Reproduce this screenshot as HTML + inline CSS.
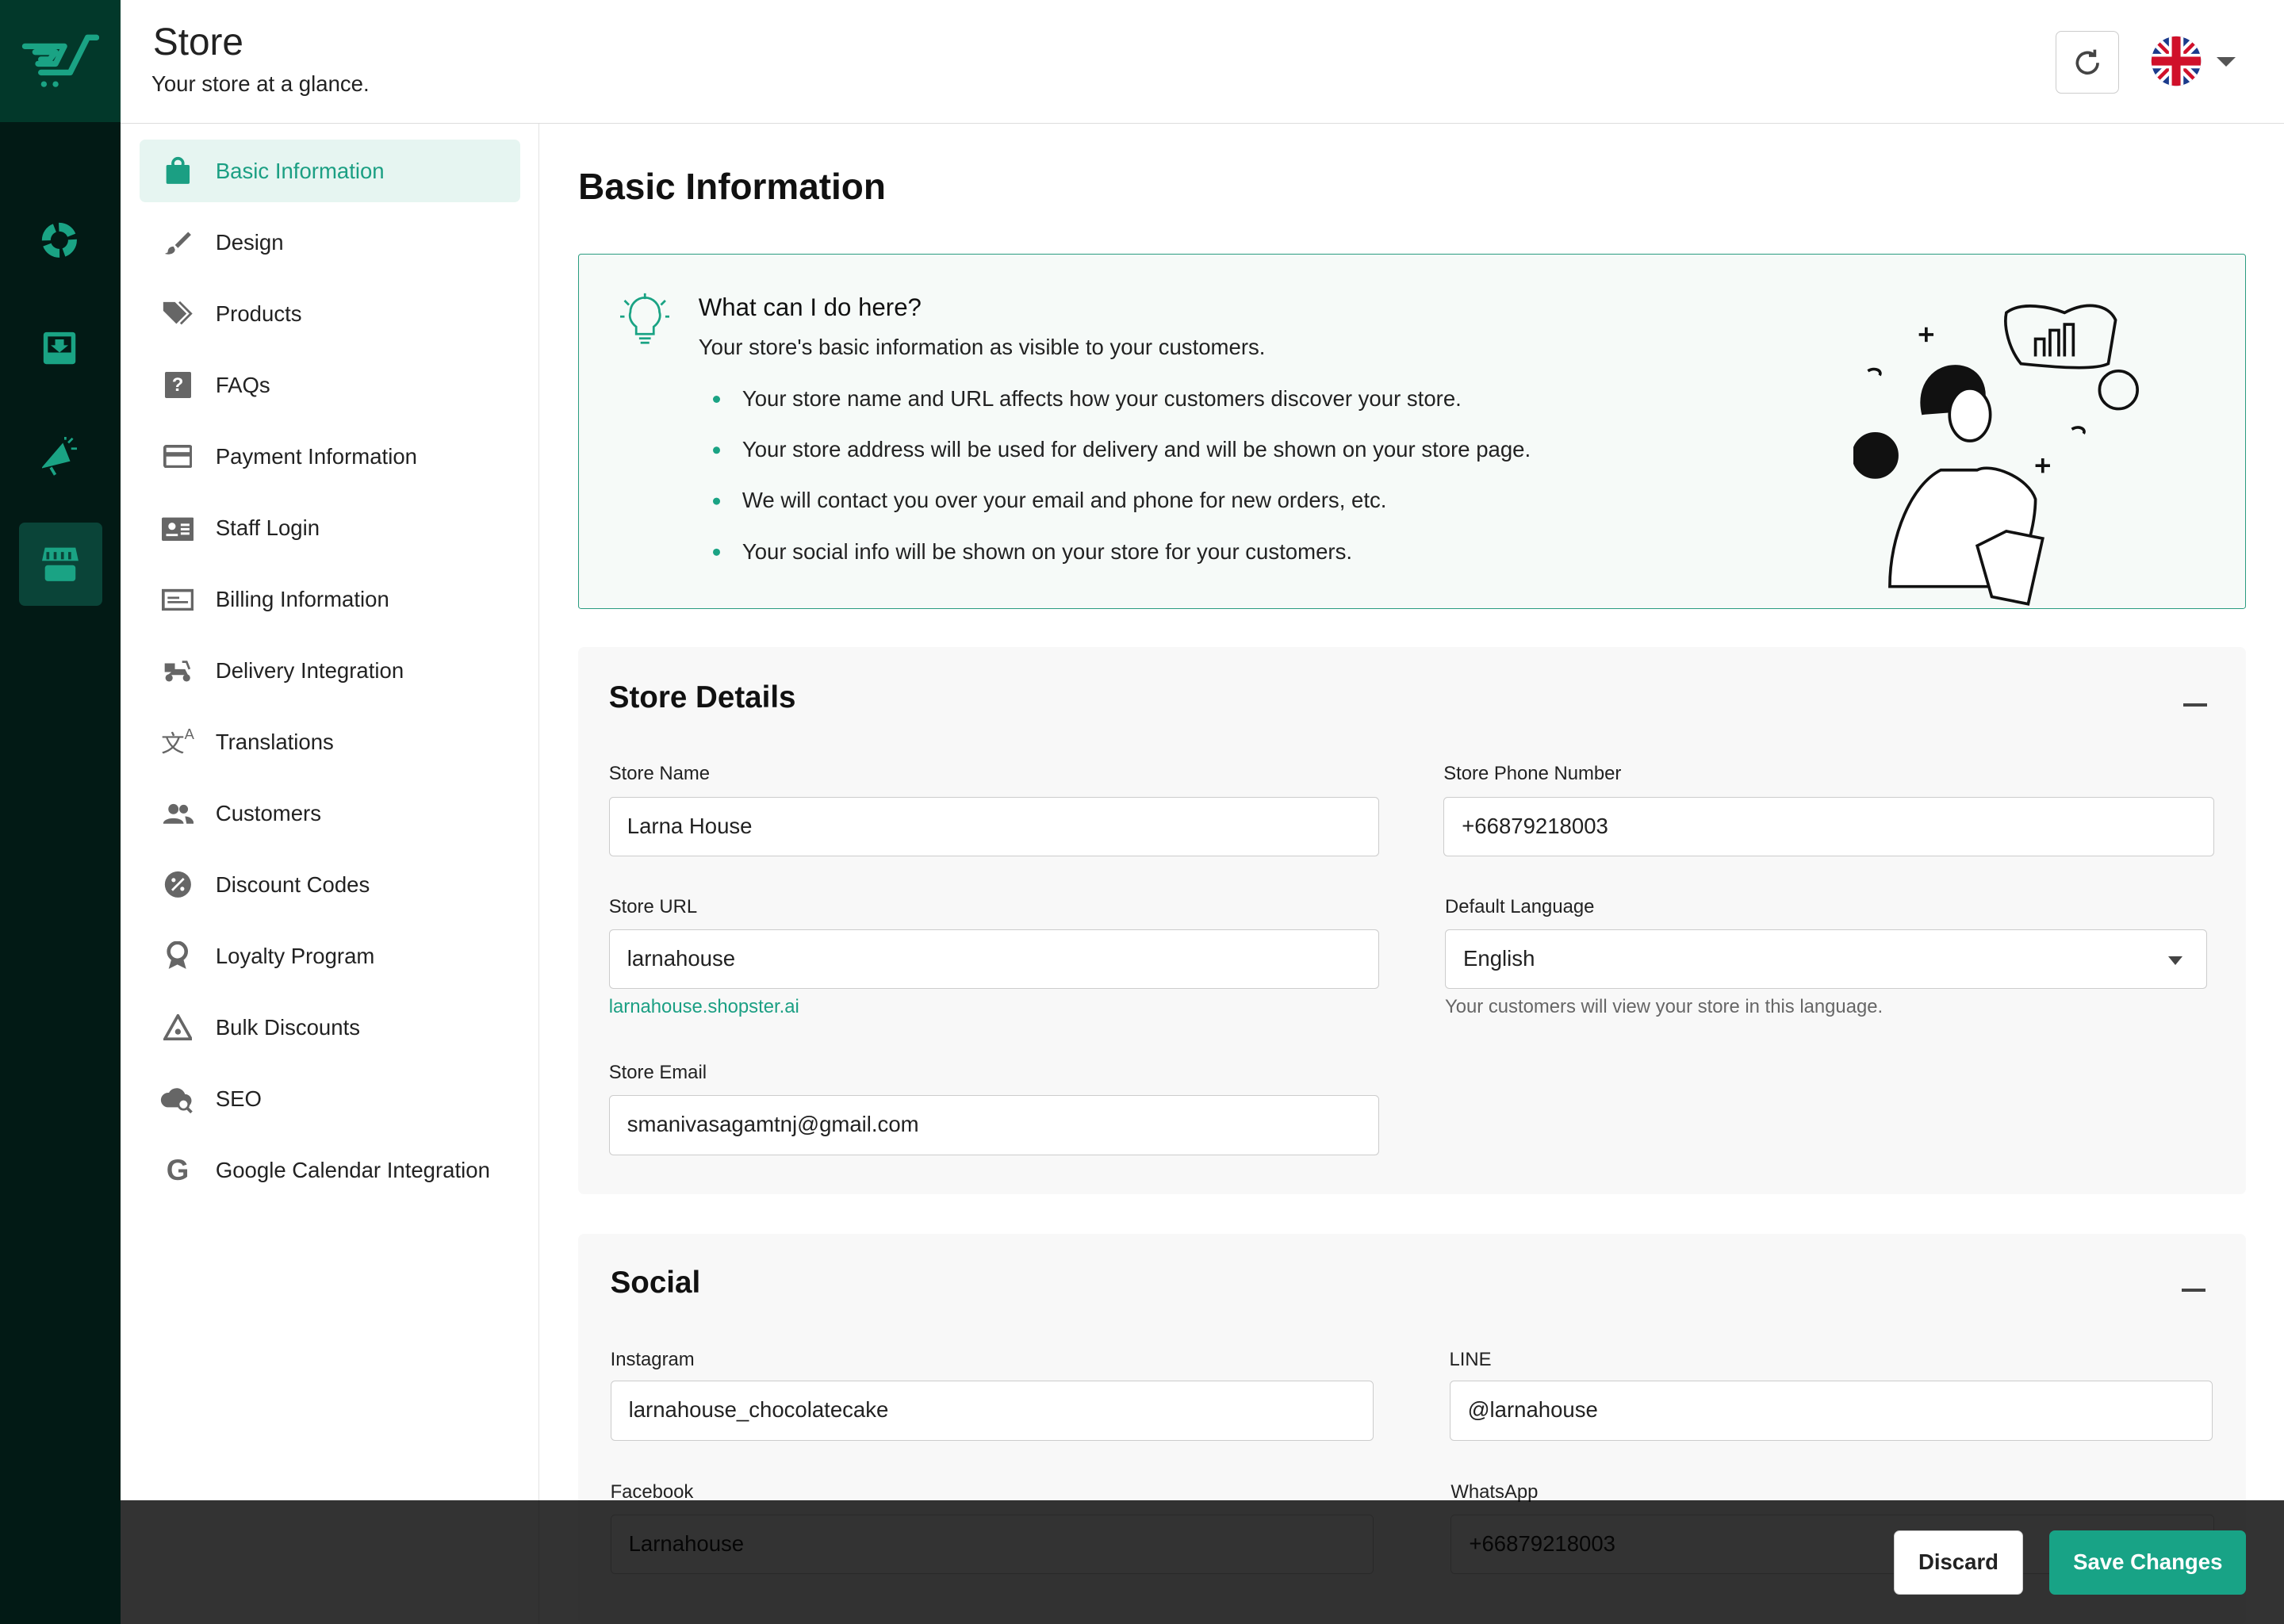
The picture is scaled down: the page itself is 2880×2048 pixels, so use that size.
<!DOCTYPE html>
<html><head><meta charset="utf-8"><style>
html{zoom:1.83673}
*{box-sizing:border-box;margin:0;padding:0}
body{width:1568px;height:1115px;overflow:hidden;font-family:"Liberation Sans",sans-serif;color:#222;background:#fff;position:relative}
.abs{position:absolute}
.rail{left:0;top:0;width:83px;height:1115px;background:#021a15}
.rail .top{position:absolute;left:0;top:0;width:83px;height:84px;background:#02382a}
.hdr{left:83px;top:0;right:0;height:85px;border-bottom:1px solid #ddd;background:#fff}
.nav{left:83px;top:85px;width:287px;height:1030px;border-right:1px solid #e2e2e2}
.item{position:absolute;left:13px;width:261px;height:43px;display:flex;align-items:center;font-size:15px;color:#222}
.item .ic{width:52px;display:flex;justify-content:center}
.item.act{background:#e6f5f1;color:#1b9f83;border-radius:4px}
h1{font-size:25px;font-weight:normal;color:#111}
.info{left:397px;top:174px;width:1145px;height:244px;border:1px solid #2a9c80;background:#f6faf8;border-radius:2px}
.card{left:397px;width:1145px;background:#f8f8f8;border-radius:4px}
.lbl{position:absolute;font-size:13px;color:#222}
.inp{position:absolute;height:41px;border:1px solid #ccc;background:#fff;border-radius:3px;font-size:15px;padding:0 12px;line-height:39px;color:#222}
.ttl{position:absolute;font-size:21px;font-weight:bold;color:#111}
.dash{position:absolute;width:16px;height:2px;background:#444}
li{margin-bottom:16px}
</style></head><body>
<div class="abs rail"><div class="top"></div>
<svg class="abs" style="left:14px;top:22px" width="54" height="42" viewBox="0 0 54 42" fill="none" stroke="#1aa384" stroke-width="4" stroke-linecap="round" stroke-linejoin="round"><path d="M3 10 H30 L24 22 H12 M10 14 H24 L20 19 H14 M14 28 H34 L46 4 H52"/><circle cx="16" cy="36" r="2" fill="#1aa384" stroke="none"/><circle cx="24" cy="36" r="2" fill="#1aa384" stroke="none"/></svg>
<svg class="abs" style="left:28px;top:152px" width="26" height="26" viewBox="0 0 26 26"><circle cx="13" cy="13" r="9" fill="none" stroke="#1aa384" stroke-width="6" stroke-dasharray="11 3"/></svg>
<svg class="abs" style="left:29px;top:227px" width="24" height="24" viewBox="0 0 24 24"><rect x="1" y="1" width="22" height="22" rx="2" fill="#1aa384"/><rect x="4" y="4" width="16" height="11" fill="#021a15"/><path d="M9 6h6v4h3l-6 5-6-5h3z" fill="#1aa384"/></svg>
<svg class="abs" style="left:29px;top:300px" width="24" height="28" viewBox="0 0 24 28"><path d="M2 20 L14 6 L18 16 Z M6 21 l3 5" fill="#1aa384" stroke="#1aa384" stroke-width="2"/><path d="M18 4 l3-3 M20 8 h4 M16 2 v-2" stroke="#1aa384" stroke-width="1.5"/></svg>
<div class="abs" style="left:13px;top:359px;width:57px;height:57px;background:#0a4438;border-radius:4px"></div>
<svg class="abs" style="left:29px;top:374px" width="25" height="26" viewBox="0 0 25 26"><path d="M2 2h21l2 9H0z" fill="#1aa384"/><path d="M4 5v5M9 5v5M14 5v5M19 5v5" stroke="#0a4438" stroke-width="2"/><rect x="2" y="14" width="21" height="11" rx="2" fill="#1aa384"/></svg>
</div>
<div class="abs hdr">
<div class="abs" style="left:22px;top:14px;font-size:26px;color:#222">Store</div>
<div class="abs" style="left:21px;top:49px;font-size:15px">Your store at a glance.</div>
<div class="abs" style="left:1328px;top:21px;width:44px;height:43px;border:1px solid #ccc;border-radius:4px"></div>
<svg class="abs" style="left:1339px;top:32px" width="22" height="22" viewBox="0 0 22 22" fill="none" stroke="#444" stroke-width="2"><path d="M18 11a7 7 0 1 1-3-5.7"/><path d="M16 2v4h-4"/></svg>
<svg class="abs" style="left:1393px;top:24px" width="36" height="36" viewBox="0 0 36 36"><clipPath id="c"><circle cx="18" cy="18" r="17"/></clipPath><g clip-path="url(#c)"><rect width="36" height="36" fill="#1a3a8c"/><path d="M0 0L36 36M36 0L0 36" stroke="#fff" stroke-width="7"/><path d="M0 0L36 36M36 0L0 36" stroke="#d0102a" stroke-width="2.5"/><path d="M18 0V36M0 18H36" stroke="#fff" stroke-width="10"/><path d="M18 0V36M0 18H36" stroke="#d0102a" stroke-width="6"/></g></svg>
<div class="abs" style="left:1439px;top:39px;border:7px solid transparent;border-top:7px solid #555;border-bottom:0"></div>
</div>
<div class="abs nav">
<div class="item act" style="top:11px"><span class="ic"><svg width="20" height="20" viewBox="0 0 20 20"><rect x="2" y="6" width="16" height="13" rx="1" fill="#1b9f83"/><circle cx="10" cy="5" r="3.5" fill="none" stroke="#1b9f83" stroke-width="2"/></svg></span>Basic Information</div>
<div class="item" style="top:60px"><span class="ic"><svg width="20" height="20" viewBox="0 0 20 20"><path d="M8 12 L17 3 L19 5 L10 14z" fill="#666"/><path d="M7 13c-3 0-4 2-4 4l-2 1c3 1 7 0 7-3z" fill="#666"/></svg></span>Design</div>
<div class="item" style="top:109px"><span class="ic"><svg width="22" height="18"><path d="M1 3 L1 1 L9 1 L17 9 L10 16 L1 7z" fill="#666"/><path d="M12 1 L20 9 L13 16" fill="none" stroke="#666" stroke-width="1.5"/></svg></span>Products</div>
<div class="item" style="top:158px"><span class="ic"><span style="display:inline-block;width:18px;height:18px;background:#666;color:#fff;font-weight:bold;font-size:13px;text-align:center;line-height:18px;border-radius:1px">?</span></span>FAQs</div>
<div class="item" style="top:207px"><span class="ic"><svg width="20" height="16"><rect x="1" y="1" width="18" height="14" rx="1" fill="none" stroke="#666" stroke-width="2"/><rect x="1" y="5" width="18" height="3" fill="#666"/></svg></span>Payment Information</div>
<div class="item" style="top:256px"><span class="ic"><svg width="22" height="18"><rect x="0" y="2" width="22" height="16" rx="1" fill="#666"/><circle cx="7" cy="8" r="2.5" fill="#fff"/><path d="M3 14h8M13 7h6M13 10h6M13 13h6" stroke="#fff" stroke-width="1.6"/></svg></span>Staff Login</div>
<div class="item" style="top:305px"><span class="ic"><svg width="22" height="16"><rect x="1" y="2" width="20" height="13" fill="none" stroke="#666" stroke-width="2"/><path d="M4 7h8M4 10h14" stroke="#666" stroke-width="1.5"/></svg></span>Billing Information</div>
<div class="item" style="top:354px"><span class="ic"><svg width="22" height="16" viewBox="0 0 22 16"><rect x="2" y="3" width="7" height="6" fill="#666"/><path d="M9 7h7l2 4H4z" fill="#666"/><circle cx="5" cy="13" r="2.5" fill="#666"/><circle cx="17" cy="13" r="2.5" fill="#666"/><path d="M14 2h3l2 5" stroke="#666" stroke-width="1.5" fill="none"/></svg></span>Delivery Integration</div>
<div class="item" style="top:403px"><span class="ic" style="color:#666;font-size:16px">文<sub style="font-size:10px">A</sub></span>Translations</div>
<div class="item" style="top:452px"><span class="ic"><svg width="22" height="14"><circle cx="8" cy="4" r="3.5" fill="#666"/><circle cx="15" cy="4" r="3" fill="#666"/><path d="M1 14c0-5 14-5 14 0zM16 9c3 0 6 2 6 5h-5" fill="#666"/></svg></span>Customers</div>
<div class="item" style="top:501px"><span class="ic"><svg width="20" height="20"><circle cx="10" cy="10" r="9" fill="#666"/><path d="M6 14L14 6" stroke="#fff" stroke-width="1.5"/><circle cx="7" cy="7" r="1.4" fill="#fff"/><circle cx="13" cy="13" r="1.4" fill="#fff"/></svg></span>Discount Codes</div>
<div class="item" style="top:550px"><span class="ic"><svg width="16" height="20"><circle cx="8" cy="7" r="6" fill="none" stroke="#666" stroke-width="2.5"/><path d="M4 12l-2 7 6-3 6 3-2-7" fill="#666"/></svg></span>Loyalty Program</div>
<div class="item" style="top:599px"><span class="ic"><svg width="20" height="18"><path d="M10 1L19 17H1z" fill="none" stroke="#666" stroke-width="2"/><circle cx="10" cy="12" r="2" fill="#666"/></svg></span>Bulk Discounts</div>
<div class="item" style="top:648px"><span class="ic"><svg width="24" height="20"><path d="M5 16a5 5 0 0 1 1-10 6 6 0 0 1 11 1 4 4 0 0 1 0 9z" fill="#666"/><circle cx="16" cy="14" r="3.5" fill="#fff" stroke="#666" stroke-width="1.5"/><path d="M18.5 16.5l3 3" stroke="#666" stroke-width="2"/></svg></span>SEO</div>
<div class="item" style="top:697px"><span class="ic" style="color:#666;font-weight:bold;font-size:20px">G</span>Google Calendar Integration</div>
</div>
<h1 class="abs" style="left:397px;top:113px;font-weight:bold;font-size:25px">Basic Information</h1>
<div class="abs info">
<svg class="abs" style="left:28px;top:26px" width="34" height="38" viewBox="0 0 34 38" fill="none" stroke="#1aa384" stroke-width="1.5"><path d="M11 24c-4-3-5-7-4-10a10 10 0 0 1 20 0c1 3 0 7-4 10v5H11z"/><path d="M13 32h8M14 35h6M17 1v4M3 6l3 3M31 6l-3 3M0 17h3M31 17h3"/></svg>
<div class="abs" style="left:82px;top:27px;font-size:17px;color:#111">What can I do here?</div>
<div class="abs" style="left:82px;top:55px;font-size:15px">Your store's basic information as visible to your customers.</div>
<ul class="abs" style="left:112px;top:90px;font-size:15px;line-height:19px;list-style:none">
<li>Your store name and URL affects how your customers discover your store.</li>
<li>Your store address will be used for delivery and will be shown on your store page.</li>
<li>We will contact you over your email and phone for new orders, etc.</li>
<li>Your social info will be shown on your store for your customers.</li>
</ul>
<div class="abs" style="left:92px;top:97px;width:5px;height:5px;border-radius:50%;background:#1aa384;box-shadow:0 35px 0 #1aa384,0 70px 0 #1aa384,0 105px 0 #1aa384"></div>
<svg class="abs" style="left:875px;top:30px" width="205" height="215" viewBox="0 0 205 215" fill="none" stroke="#111" stroke-width="2"><path d="M105 10c10-8 30-4 40 0 15-8 30-6 35 5l-5 30c-10 5-40 2-60 0-8-10-12-25-10-35z"/><path d="M125 40v-12h6v12M135 40v-18h6v18M145 40v-22h6v22"/><circle cx="182" cy="63" r="13"/><path d="M48 80c-5-20 8-35 25-33 14 2 20 15 15 30" fill="#111"/><ellipse cx="80" cy="80" rx="14" ry="18" fill="#fff"/><path d="M60 118c-20 10-35 45-35 80h70c20 0 30-40 30-60-5-15-30-25-40-20z" fill="#fff"/><path d="M85 170l20-10 25 5-10 45-25-5z" fill="#fff"/><circle cx="15" cy="108" r="15" fill="#111"/><path d="M45 25h10M50 20v10M125 115h10M130 110v10M10 50c5-3 10 0 8 3M150 90c5-3 10 0 8 3"/></svg>
</div>
<div class="abs card" style="top:444px;height:376px">
<div class="ttl" style="left:21px;top:23px">Store Details</div><div class="dash" style="left:1102px;top:39px"></div>
<div class="lbl" style="left:21px;top:80px">Store Name</div><div class="inp" style="left:21px;top:103px;width:529px">Larna House</div>
<div class="lbl" style="left:594px;top:80px">Store Phone Number</div><div class="inp" style="left:594px;top:103px;width:529px">+66879218003</div>
<div class="lbl" style="left:21px;top:171px">Store URL</div><div class="inp" style="left:21px;top:194px;width:529px">larnahouse</div>
<div class="lbl" style="left:21px;top:240px;color:#1b9f83">larnahouse.shopster.ai</div>
<div class="lbl" style="left:595px;top:171px">Default Language</div><div class="inp" style="left:595px;top:194px;width:523px">English<span style="position:absolute;right:16px;top:18px;border:5px solid transparent;border-top:6px solid #444;border-bottom:0"></span></div>
<div class="lbl" style="left:595px;top:240px;color:#666">Your customers will view your store in this language.</div>
<div class="lbl" style="left:21px;top:285px">Store Email</div><div class="inp" style="left:21px;top:308px;width:529px">smanivasagamtnj@gmail.com</div>
</div>
<div class="abs card" style="top:847px;height:268px">
<div class="ttl" style="left:22px;top:22px">Social</div><div class="dash" style="left:1101px;top:38px"></div>
<div class="lbl" style="left:22px;top:79px">Instagram</div><div class="inp" style="left:22px;top:101px;width:524px">larnahouse_chocolatecake</div>
<div class="lbl" style="left:598px;top:79px">LINE</div><div class="inp" style="left:598px;top:101px;width:524px">@larnahouse</div>
<div class="lbl" style="left:22px;top:170px">Facebook</div><div class="inp" style="left:22px;top:193px;width:524px">Larnahouse</div>
<div class="lbl" style="left:599px;top:170px">WhatsApp</div><div class="inp" style="left:599px;top:193px;width:524px">+66879218003</div>
</div>
<div class="abs" style="left:83px;top:1030px;width:1485px;height:85px;background:rgba(0,0,0,0.8)"></div>
<div class="abs" style="left:1300px;top:1051px;width:89px;height:44px;background:#fff;border:1px solid #ccc;border-radius:4px;font-size:15px;font-weight:bold;text-align:center;line-height:42px;color:#222">Discard</div>
<div class="abs" style="left:1407px;top:1051px;width:135px;height:44px;background:#18a386;border-radius:4px;font-size:15px;font-weight:bold;text-align:center;line-height:44px;color:#fff">Save Changes</div>
</body></html>
